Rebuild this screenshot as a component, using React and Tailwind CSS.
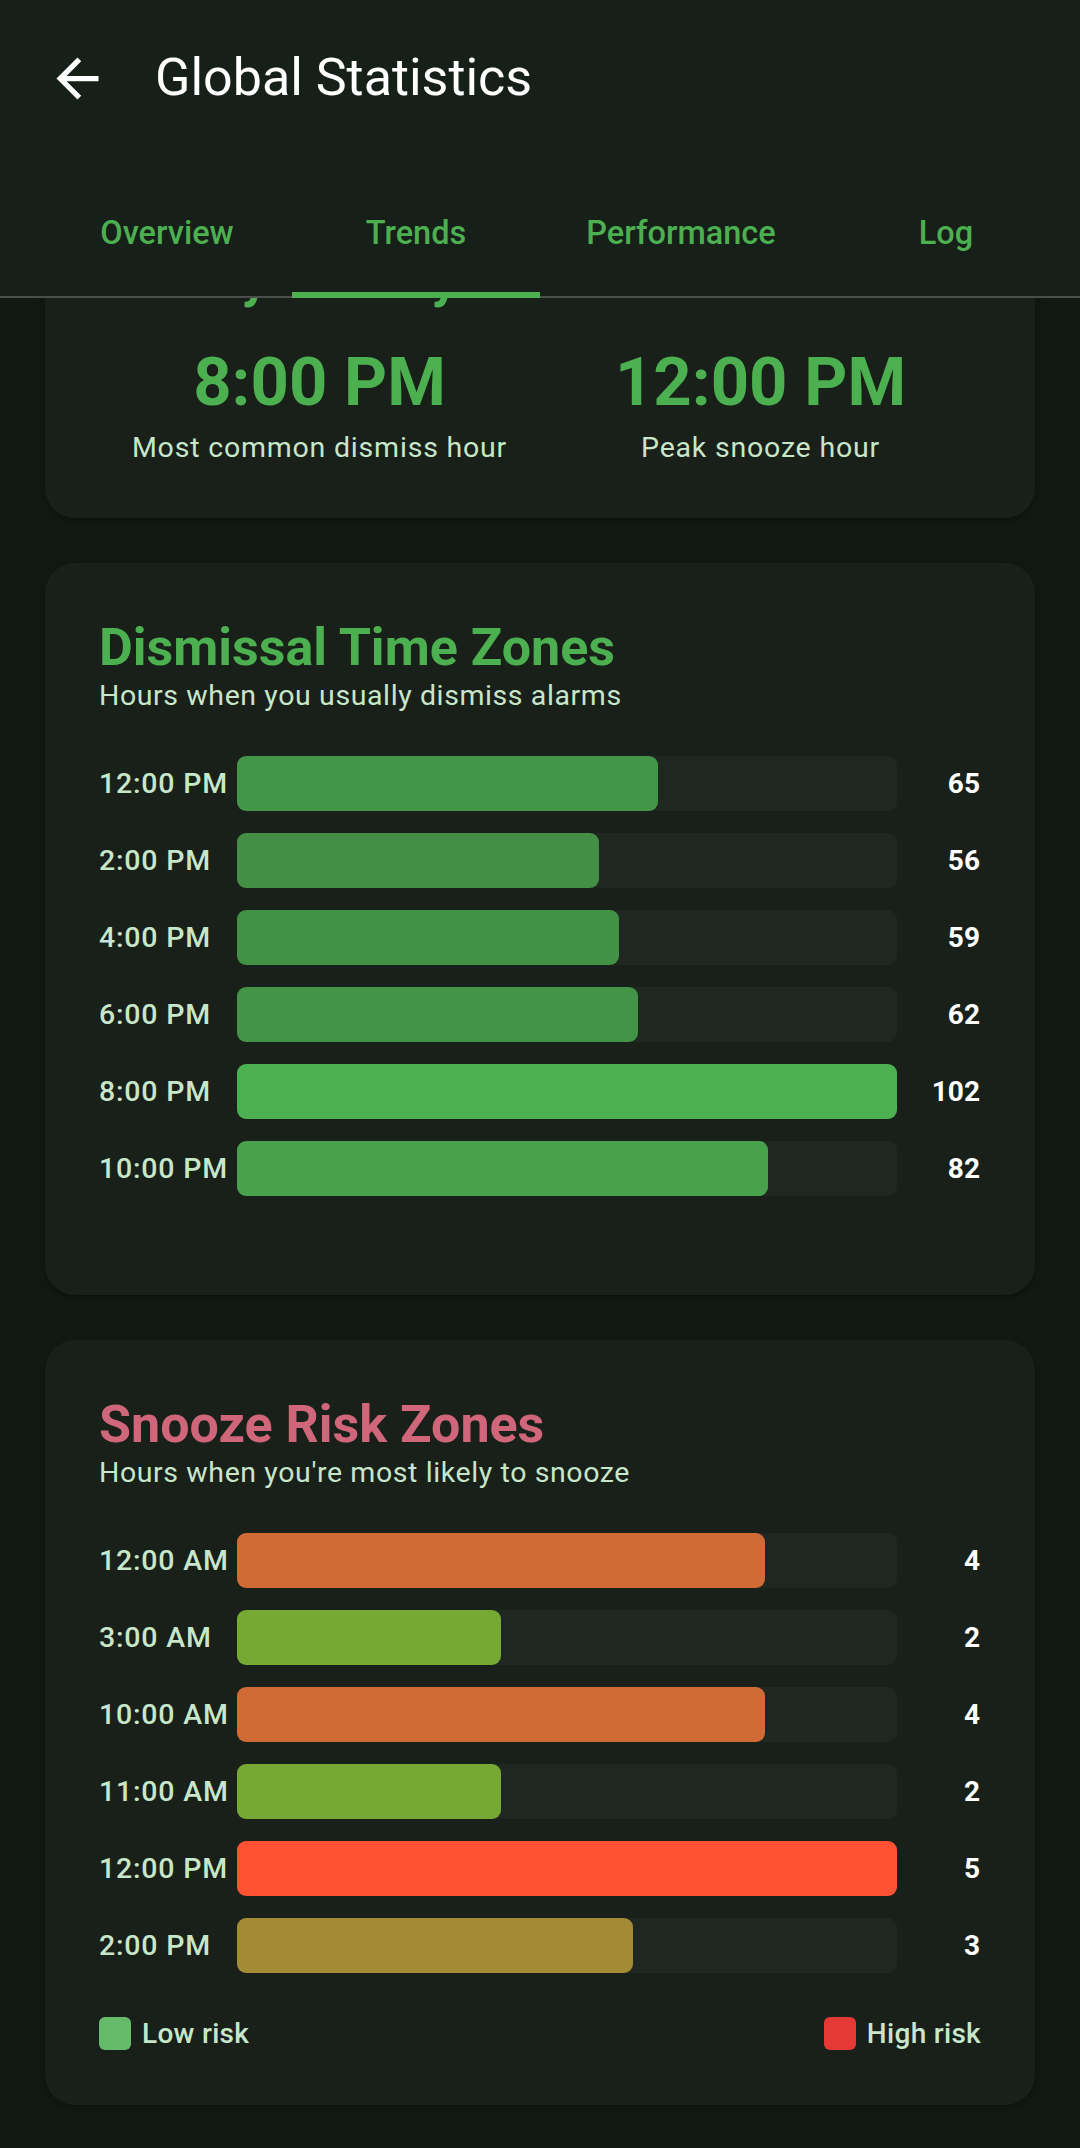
import React from "react";

const dismiss = [
  ["12:00 PM", 65],
  ["2:00 PM", 56],
  ["4:00 PM", 59],
  ["6:00 PM", 62],
  ["8:00 PM", 102],
  ["10:00 PM", 82],
];

const snooze = [
  ["12:00 AM", 4, "bg-[#d06b35]"],
  ["3:00 AM", 2, "bg-[#76a834]"],
  ["10:00 AM", 4, "bg-[#d06b35]"],
  ["11:00 AM", 2, "bg-[#76a834]"],
  ["12:00 PM", 5, "bg-[#ff5233]"],
  ["2:00 PM", 3, "bg-[#a38a35]"],
];

function BarRow({ label, value, pct, fillClass, fillStyle }) {
  return (
    <div className="flex items-center h-[55px]">
      <div className="w-[138px] shrink-0 whitespace-nowrap text-[28.5px] leading-[33px] font-medium tracking-[0.8px] text-[#c8e6c9]">
        {label}
      </div>
      <div className="flex-1 h-full rounded-[9px] bg-[#1f2720]">
        <div
          className={"h-full rounded-[9px] " + (fillClass || "")}
          style={{ width: pct + "%", ...(fillStyle || {}) }}
        />
      </div>
      <div className="w-[84px] shrink-0 pr-[1px] text-right text-[28px] leading-[33px] font-bold text-white">
        {value}
      </div>
    </div>
  );
}

function Card({ children, className }) {
  return (
    <div
      className={
        "mx-[45px] rounded-[30px] bg-[#182019] px-[54px] pt-[54px] shadow-[0_3px_8px_rgba(0,0,0,0.35)] " +
        (className || "")
      }
    >
      {children}
    </div>
  );
}

export default function App() {
  const dMax = 102;
  return (
    <div className="w-[1080px] min-h-[2148px] bg-[#121913] font-['Roboto',sans-serif] overflow-hidden">
      {/* Header */}
      <div className="relative z-10 bg-[#171f19]">
        <div className="h-[156px] flex items-center pl-[46px]">
          <svg width="63" height="63" viewBox="0 0 24 24" className="shrink-0">
            <path
              d="M20 11H7.83l5.59-5.59L12 4l-8 8 8 8 1.41-1.41L7.83 13H20v-2z"
              fill="#ffffff"
            />
          </svg>
          <div className="ml-[46px] text-[52px] leading-[62px] text-white">
            Global Statistics
          </div>
        </div>
        <div className="relative h-[142px]">
          <div className="flex h-full pl-[42px]">
            {[
              ["Overview", "w-[250px]", false],
              ["Trends", "w-[248px]", true],
              ["Performance", "w-[282px]", false],
              ["Log", "w-[248px]", false],
            ].map(([t, w, sel]) => (
              <div
                key={t}
                className={"relative h-full flex items-center justify-center pt-[12px] " + w}
              >
                <span className="text-[32.5px] font-medium text-[#4caf50]">{t}</span>
                {sel && (
                  <div className="absolute left-0 right-0 bottom-0 h-[6px] bg-[#4caf50] z-10" />
                )}
              </div>
            ))}
          </div>
          <div className="absolute left-0 right-0 bottom-0 h-[2px] bg-[#4a4f4b]" />
        </div>
      </div>

      {/* Scrolled content */}
      <div className="overflow-hidden">
        <div className="mt-[-104px] pb-[44px] flex flex-col gap-[45px]">
          <Card className="pb-[54px]">
            <div className="text-[52px] leading-[62px] font-bold text-[#4caf50]">
              Weekly Activity
            </div>
            <div className="grid grid-cols-2 text-center mt-[32px]">
              <div>
                <div className="text-[67px] leading-[80px] font-bold text-[#4caf50]">8:00 PM</div>
                <div className="mt-[9px] text-[28.5px] leading-[33px] tracking-[0.8px] text-[#c8e6c9]">
                  Most common dismiss hour
                </div>
              </div>
              <div>
                <div className="text-[67px] leading-[80px] font-bold text-[#4caf50]">12:00 PM</div>
                <div className="mt-[9px] text-[28.5px] leading-[33px] tracking-[0.8px] text-[#c8e6c9]">
                  Peak snooze hour
                </div>
              </div>
            </div>
          </Card>

          <Card className="pb-[99px]">
            <div className="text-[52px] leading-[62px] font-bold text-[#4caf50]">
              Dismissal Time Zones
            </div>
            <div className="text-[28.5px] leading-[33px] tracking-[0.6px] text-[#c8e6c9]">
              Hours when you usually dismiss alarms
            </div>
            <div className="mt-[44px] flex flex-col gap-[22px]">
              {dismiss.map(([l, v]) => {
                const r = v / dMax;
                return (
                  <BarRow
                    key={l}
                    label={l}
                    value={v}
                    pct={r * 100}
                    fillStyle={{ backgroundColor: `rgba(76,175,80,${0.5 + 0.5 * r})` }}
                  />
                );
              })}
            </div>
          </Card>

          <Card className="pb-[55px]">
            <div className="text-[52px] leading-[62px] font-bold text-[#cf6679]">
              Snooze Risk Zones
            </div>
            <div className="text-[28.5px] leading-[33px] tracking-[0.6px] text-[#c8e6c9]">
              Hours when you're most likely to snooze
            </div>
            <div className="mt-[44px] flex flex-col gap-[22px]">
              {snooze.map(([l, v, c]) => (
                <BarRow key={l} label={l} value={v} pct={(v / 5) * 100} fillClass={c} />
              ))}
            </div>
            <div className="mt-[44px] flex items-center justify-between h-[33px]">
              <div className="flex items-center gap-[11px]">
                <div className="w-[32px] h-[33px] rounded-[6px] bg-[#66bb6a]" />
                <span className="text-[28px] font-medium tracking-[0.3px] text-[#c8e6c9]">Low risk</span>
              </div>
              <div className="flex items-center gap-[11px]">
                <div className="w-[32px] h-[33px] rounded-[6px] bg-[#e53935]" />
                <span className="text-[28px] font-medium tracking-[0.3px] text-[#c8e6c9]">High risk</span>
              </div>
            </div>
          </Card>
        </div>
      </div>
    </div>
  );
}
